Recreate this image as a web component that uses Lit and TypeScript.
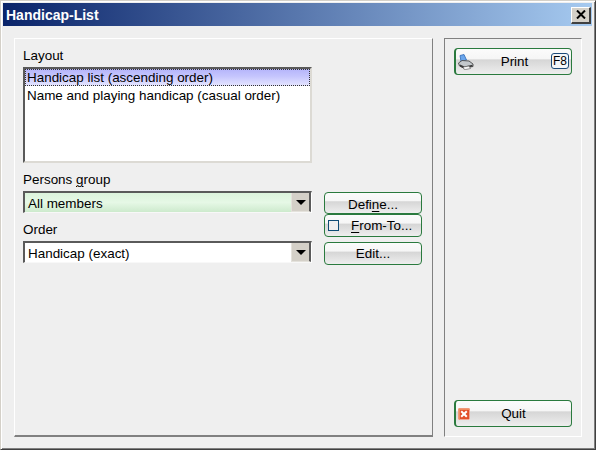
import { LitElement, html, css, svg } from "lit";
import { customElement } from "lit/decorators.js";

const printerIcon = svg`<svg class="ico" width="16" height="16" viewBox="0 0 16 16">
  <path d="M2 1.5 L6 0.5 L8.5 6 L3 7.5 Z" fill="#6aa6ec" stroke="#2f69b5" stroke-width=".8"/>
  <path d="M0.5 9 L4 6.5 L11 7 L15 10 L15 12.5 L6 14 L1.5 12 Z" fill="#c3c8cc" stroke="#4a4a4a" stroke-width=".9"/>
  <path d="M2 10.5 L6.5 12.5 L14.5 10.8 L14.5 12.5 L6 14.5 L2 12.5 Z" fill="#3a3a3a"/>
  <path d="M5 13 L11 12 L12.5 14.5 L6.5 15.8 Z" fill="#f5f5f5" stroke="#555" stroke-width=".6"/>
</svg>`;

const quitIcon = svg`<svg class="ico" width="12" height="12" viewBox="0 0 12 12">
  <rect width="12" height="12" fill="#fff"/>
  <rect x="0.5" y="0.5" width="11" height="11" fill="#e2502a"/>
  <path d="M0.5 0.5 H11.5 V2 H2 V11.5 H0.5 Z" fill="#ef8a5e"/>
  <path d="M3.2 3.2 L8.8 8.8 M8.8 3.2 L3.2 8.8" stroke="#fff" stroke-width="2"/>
</svg>`;

const arrow = svg`<svg width="10" height="5" viewBox="0 0 10 5"><path d="M0 0 H10 L5 5 Z" fill="#000"/></svg>`;

@customElement("app-root")
export class AppRoot extends LitElement {
  static styles = css`
    :host {
      display: block;
      width: 596px;
      height: 450px;
      font-family: "Liberation Sans", Arial, sans-serif;
      font-size: 13.45px;
      color: #000;
    }
    * { box-sizing: border-box; }
    .window {
      width: 596px;
      height: 450px;
      background: #efefef;
      border: 1px solid;
      border-color: #d4d0c8 #404040 #404040 #d4d0c8;
      box-shadow: inset 1px 1px 0 #fff, inset -1px -1px 0 #808080;
      padding: 2px 3px 3px 2px;
      display: flex;
      flex-direction: column;
    }
    .titlebar {
      height: 23px;
      flex: none;
      background: linear-gradient(90deg, #0a246a, #a6caf0);
      display: flex;
      align-items: center;
      justify-content: space-between;
      padding: 1px 1px 0 3px;
      color: #fff;
      font-weight: bold;
      font-size: 14px;
    }
    .close {
      width: 20px;
      height: 17px;
      background: #d4d0c8;
      border: 1px solid;
      border-width: 1px 2px 2px 1px;
      border-color: #fff #404040 #404040 #fff;
      display: flex;
      align-items: center;
      justify-content: center;
    }
    .content {
      flex: 1;
      display: flex;
      padding: 12px 10px 9px 11px;
      gap: 11px;
    }
    .left {
      width: 419px;
      border: 1px solid;
      border-width: 1px 1px 2px 1px;
      border-color: #fff #808080 #808080 #fff;
      padding: 9px 9px 0 8px;
      display: flex;
      flex-direction: column;
    }
    .right {
      flex: 1;
      border: 1px solid;
      border-color: #808080 #fff #fff #808080;
      padding: 9px;
      display: flex;
      flex-direction: column;
      justify-content: space-between;
    }
    .label { height: 16px; line-height: 16px; }
    .fields .label { line-height: 18px; }
    u { text-decoration-thickness: 1px; text-underline-offset: 2px; }
    .list {
      margin-top: 3px;
      width: 289px;
      height: 96px;
      background: #fff;
      border: 2px solid;
      border-color: #5a5a5a #dcdad4 #dcdad4 #5a5a5a;
    }
    .item { height: 17px; line-height: 17px; padding-left: 2px; white-space: nowrap; }
    .item + .item { margin-top: 1px; }
    .item.sel {
      line-height: 18px;
      background: linear-gradient(#b4b4fa, #c6c6fd 45%, #e6e6ff);
      outline: 1px dotted #333;
      outline-offset: -1px;
    }
    .lower { display: flex; gap: 11px; margin-top: 8px; }
    .fields { width: 290px; display: flex; flex-direction: column; }
    .select {
      margin-top: 4px;
      width: 289px;
      height: 22px;
      border: solid;
      border-width: 2px 1px 1px 2px;
      border-color: #5a5a5a #fff #f8f8f8 #5a5a5a;
      background: #fff;
      display: flex;
      align-items: stretch;
      line-height: 21px;
      padding-left: 3px;
    }
    .select.green { background: linear-gradient(#dcf4dc, #e6f8e6 50%, #cdeacd); }
    .select .val { flex: 1; }
    .select .drop {
      width: 20px;
      background: #d4d0c8;
      border: solid;
      border-width: 0 2px 1px 1px;
      border-color: #5a5a5a #5a5a5a #e4e2dc #e4e2dc;
      display: flex;
      align-items: center;
      justify-content: center;
    }
    .order { margin-top: 8px; }
    .buttons { width: 98px; display: flex; flex-direction: column; margin-top: 21px; }
    .btn {
      height: 23px;
      border: 1px solid #2a7a3e;
      border-radius: 4px;
      background: linear-gradient(#fbfbfb 0, #f6f6f6 38%, #d6d6d6 44%, #eeeeee 100%);
      display: flex;
      align-items: center;
      justify-content: center;
      white-space: nowrap;
      position: relative;
    }
    .btn.first { height: 22px; padding-top: 2px; }
    .btn.start { justify-content: flex-start; }
    .gap { margin-top: 5px; }
    .check {
      width: 11px;
      height: 11px;
      border: 1px solid #0f4c75;
      background: #efefef;
      margin: 0 12px 0 3px;
      flex: none;
    }
    .big {
      height: 27px;
      width: 118px;
      border-width: 1px 1px 1px 2px;
    }
    .big .ico { position: absolute; left: 2px; top: 5px; }
    .big .key {
      position: absolute;
      right: 2px;
      top: 4px;
      width: 18px;
      height: 16px;
      border: 1px solid #1c4a78;
      border-radius: 3px;
      background: #f4f6f8;
      font-size: 12px;
      line-height: 14px;
      text-align: center;
    }
    .big .txt { margin-left: 2px; }
    .big.quit .txt { margin-left: 0; }
    .big.quit .ico { top: 7px; left: 2px; }
  `;

  render() {
    return html`
      <div class="window">
        <div class="titlebar">
          <span>Handicap-List</span>
          <span class="close">
            <svg width="10" height="9" viewBox="0 0 10 9"><path d="M1 0.5 L9 8.5 M9 0.5 L1 8.5" stroke="#000" stroke-width="2"/></svg>
          </span>
        </div>
        <div class="content">
          <div class="left">
            <div class="label">Layout</div>
            <div class="list">
              <div class="item sel">Handicap list (ascending order)</div>
              <div class="item">Name and playing handicap (casual order)</div>
            </div>
            <div class="lower">
              <div class="fields">
                <div class="label">Persons <u>g</u>roup</div>
                <div class="select green"><span class="val">All members</span><span class="drop">${arrow}</span></div>
                <div class="label order">Order</div>
                <div class="select"><span class="val">Handicap (exact)</span><span class="drop">${arrow}</span></div>
              </div>
              <div class="buttons">
                <div class="btn first">Defi<u>n</u>e...</div>
                <div class="btn start"><span class="check"></span><span><u>F</u>rom-To...</span></div>
                <div class="btn gap">Edit...</div>
              </div>
            </div>
          </div>
          <div class="right">
            <div class="btn big">${printerIcon}<span class="txt">Print</span><span class="key">F8</span></div>
            <div class="btn big quit">${quitIcon}<span class="txt">Quit</span></div>
          </div>
        </div>
      </div>
    `;
  }
}
